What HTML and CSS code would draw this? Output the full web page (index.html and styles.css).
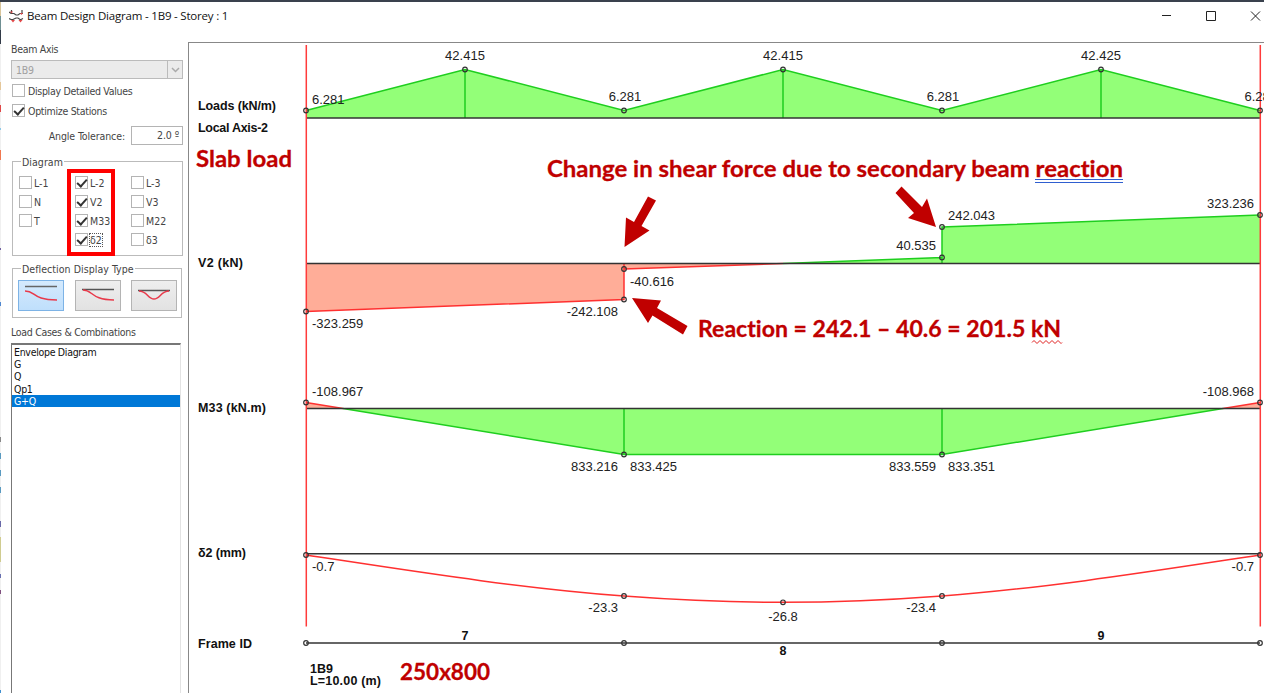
FILE: index.html
```html
<!DOCTYPE html>
<html lang="en">
<head>
  <meta charset="UTF-8">
  <title>Beam Design Diagram</title>
  <link rel="stylesheet" href="styles.css">
</head>
<body>

  <div class="desktop-edge"></div>

  <div class="window">
    <div class="titlebar">
      <svg class="app-icon" width="15" height="13" viewBox="0 0 15 13">
        <path d="M0 2l2 1.500h3L7 5h2l2-1.500h3M0 8.500l2 1h2l3-1.500h2l2 1.500h1l2-1M2.500 0v3M13 0v4" fill="none" stroke="#444" stroke-width="1.200"/>
        <path d="M1 1.500h3L2.500 3.500zM11 3h3l-1.500 2zM2 10h4l-2 2.500zM9.500 10h4l-2 2.500z" fill="#e04848"/>
      </svg>
      <span class="title">Beam Design Diagram - 1B9 - Storey : 1</span>
      <svg class="window-buttons" width="104" height="14" viewBox="0 0 104 14">
        <path d="M4 7.500h9M48.500 3.500h9v9h-9zM93 3.500l9 9M102 3.500l-9 9" fill="none" stroke="#222"/>
      </svg>
    </div>

    <div class="main">
      <div class="sidebar">
        <div class="label axis-label">Beam Axis</div>
        <div class="combo">
          <span>1B9</span>
          <div class="combo-arrow"><svg width="9" height="6" viewBox="0 0 9 6"><path d="M1 1l3.500 3.500L8 1" fill="none" stroke="#aaa" stroke-width="1.500"/></svg></div>
        </div>
        <div class="check detailed"><i class="box"></i><span>Display Detailed Values</span></div>
        <div class="check optimize"><i class="box on"></i><span>Optimize Stations</span></div>
        <div class="tolerance">
          <span>Angle Tolerance:</span>
          <div class="number">2.0 º</div>
        </div>

        <div class="group diagram">
          <span class="legend">Diagram</span>
          <div class="check-grid">
            <div class="check"><i class="box"></i><span>L-1</span></div>
            <div class="check"><i class="box on"></i><span>L-2</span></div>
            <div class="check"><i class="box"></i><span>L-3</span></div>
            <div class="check"><i class="box"></i><span>N</span></div>
            <div class="check"><i class="box on"></i><span>V2</span></div>
            <div class="check"><i class="box"></i><span>V3</span></div>
            <div class="check"><i class="box"></i><span>T</span></div>
            <div class="check"><i class="box on"></i><span>M33</span></div>
            <div class="check"><i class="box"></i><span>M22</span></div>
            <div></div>
            <div class="check"><i class="box on"></i><span class="focus">δ2</span></div>
            <div class="check"><i class="box"></i><span>δ3</span></div>
          </div>
          <div class="highlight"></div>
        </div>

        <div class="group deflection">
          <span class="legend">Deflection Display Type</span>
          <div class="types">
            <div class="type selected"><svg width="44" height="29" viewBox="0 0 44 29"><path d="M6 5.500h32" stroke="#666" stroke-width="1.500"/><path d="M6 10c11 0 7 9 32 9" fill="none" stroke="#e8394a" stroke-width="1.500"/></svg></div>
            <div class="type"><svg width="44" height="29" viewBox="0 0 44 29"><path d="M6 8.500h32" stroke="#555" stroke-width="1.500"/><path d="M7 9c10 0 8 10 31 10" fill="none" stroke="#e8394a" stroke-width="1.500"/></svg></div>
            <div class="type"><svg width="44" height="29" viewBox="0 0 44 29"><path d="M6 9.500h32" stroke="#555" stroke-width="1.500"/><path d="M7 10c8 0 9 8 15 8s7-8 15-8" fill="none" stroke="#e8394a" stroke-width="1.500"/></svg></div>
          </div>
        </div>

        <div class="label cases-label">Load Cases &amp; Combinations</div>
        <ul class="cases">
          <li>Envelope Diagram</li>
          <li>G</li>
          <li>Q</li>
          <li>Qp1</li>
          <li class="active">G+Q</li>
        </ul>
      </div>

      <div class="chart">
        <svg width="1075" height="650" viewBox="189 43 1075 650">
          <!-- row titles -->
          <g class="row-title">
            <text x="198" y="110" textLength="78">Loads (kN/m)</text>
            <text x="198" y="132" textLength="70">Local Axis-2</text>
            <text x="198" y="267" textLength="45">V2 (kN)</text>
            <text x="198" y="412" textLength="68">M33 (kN.m)</text>
            <text x="198" y="557" textLength="48">δ2 (mm)</text>
            <text x="198" y="648" textLength="54">Frame ID</text>
            <text x="310" y="673" textLength="23">1B9</text>
            <text x="310" y="685" textLength="71">L=10.00 (m)</text>
          </g>

          <!-- loads -->
          <path class="pos" d="M306 118V110.500L465 69.500L624 110.500L783 69.500L942 110.500L1101 69.500L1260 110.500V118z"/>
          <path class="pos-line" d="M306 110.500L465 69.500L624 110.500L783 69.500L942 110.500L1101 69.500L1260 110.500M465 69.500V118M783 69.500V118M1101 69.500V118"/>
          <path class="base" d="M306 118H1260"/>

          <!-- shear -->
          <path class="neg" d="M306 263.500V311.500L624 299.500V269L783 263.500z"/>
          <path class="neg-line" d="M306 311.500L624 299.500V263.500M624 269L783 263.500"/>
          <path class="pos" d="M783 263.500L942 257.500V227L1260 215V263.500z"/>
          <path class="pos-line" d="M783 263.500L942 257.500M942 263.500V227L1260 215"/>
          <path class="base" d="M306 263.500H1260"/>

          <!-- moment -->
          <path class="neg" d="M306 408.500V402.500L343 408.500zM1260 408.500V402.500L1223 408.500z"/>
          <path class="neg-line" d="M306 402.500L343 408.500M1260 402.500L1223 408.500"/>
          <path class="pos" d="M343 408.500L624 454.500H942L1223 408.500z"/>
          <path class="pos-line" d="M343 408.500L624 454.500H942L1223 408.500M624 408.500V454.500M942 408.500V454.500"/>
          <path class="base" d="M306 408.500H1260"/>

          <!-- deflection -->
          <path class="base" d="M306 553.800H1260"/>
          <path class="neg-line" d="M306 555C412 571 518 588 624 596C677 600 730 602.300 783 602.300C836 602.300 889 600 942 596C1048 588 1154 571 1260 555"/>

          <!-- frames -->
          <path class="base" d="M306 643H1260"/>

          <path class="support" d="M306.300 45V626.500M1260.300 45V626.500"/>

          <g class="node">
            <circle cx="306" cy="110.500" r="2.300"/><circle cx="465" cy="69.500" r="2.300"/><circle cx="624" cy="110.500" r="2.300"/><circle cx="783" cy="69.500" r="2.300"/>
            <circle cx="942" cy="110.500" r="2.300"/><circle cx="1101" cy="69.500" r="2.300"/><circle cx="1260" cy="110.500" r="2.300"/>
            <circle cx="306" cy="311.500" r="2.300"/><circle cx="624" cy="299.500" r="2.300"/><circle cx="624" cy="269" r="2.300"/>
            <circle cx="942" cy="257.500" r="2.300"/><circle cx="942" cy="227" r="2.300"/><circle cx="1260" cy="215" r="2.300"/>
            <circle cx="306" cy="402.500" r="2.300"/><circle cx="624" cy="454.500" r="2.300"/><circle cx="942" cy="454.500" r="2.300"/><circle cx="1260" cy="402.500" r="2.300"/>
            <circle cx="306" cy="555" r="2.300"/><circle cx="624" cy="596" r="2.300"/><circle cx="783" cy="602.300" r="2.300"/><circle cx="942" cy="596" r="2.300"/><circle cx="1260" cy="555" r="2.300"/>
            <circle cx="306" cy="643" r="2.300"/><circle cx="624" cy="643" r="2.300"/><circle cx="942" cy="643" r="2.300"/><circle cx="1260" cy="643" r="2.300"/>
          </g>

          <g class="value">
            <text x="312" y="104">6.281</text>
            <text x="465" y="60" class="mid">42.415</text>
            <text x="625" y="101" class="mid">6.281</text>
            <text x="783" y="60" class="mid">42.415</text>
            <text x="943" y="101" class="mid">6.281</text>
            <text x="1101" y="60" class="mid">42.425</text>
            <text x="1244.500" y="101">6.281</text>
            <text x="312" y="328">-323.259</text>
            <text x="618" y="316" class="end">-242.108</text>
            <text x="630" y="286">-40.616</text>
            <text x="936" y="250" class="end">40.535</text>
            <text x="948" y="220">242.043</text>
            <text x="1254" y="208" class="end">323.236</text>
            <text x="312" y="396">-108.967</text>
            <text x="1254" y="396" class="end">-108.968</text>
            <text x="618" y="471" class="end">833.216</text>
            <text x="630" y="471">833.425</text>
            <text x="936" y="471" class="end">833.559</text>
            <text x="948" y="471">833.351</text>
            <text x="312" y="571">-0.7</text>
            <text x="1254" y="571" class="end">-0.7</text>
            <text x="618" y="612" class="end">-23.3</text>
            <text x="783" y="621" class="mid">-26.8</text>
            <text x="936" y="612" class="end">-23.4</text>
          </g>
          <g class="row-title">
            <text x="465" y="640" class="mid">7</text>
            <text x="783" y="655" class="mid">8</text>
            <text x="1101" y="640" class="mid">9</text>
          </g>

          <!-- notes -->
          <g class="note">
            <text x="196" y="167" textLength="96" lengthAdjust="spacingAndGlyphs">Slab load</text>
            <text x="547" y="177" textLength="576" lengthAdjust="spacingAndGlyphs">Change in shear force due to secondary beam reaction</text>
            <text x="698" y="337" textLength="363" lengthAdjust="spacingAndGlyphs">Reaction = 242.1 – 40.6 = 201.5 kN</text>
            <text x="400" y="680" textLength="90" lengthAdjust="spacingAndGlyphs">250x800</text>
          </g>
          <g class="arrow">
            <path d="M648 196.500L656 200.500L641.500 226L649.500 230.500L624.500 247L626 217.500L634 222z"/>
            <path d="M901.500 186.500L922 207L927 198.500L936 227L908 218L914 213L895.500 193z"/>
            <path d="M632 298L661 300.500L657 308L687.500 326L683 334.500L652.500 315.500L648 323z"/>
          </g>
          <path class="grammar" d="M1035 179.500H1123M1035 182.500H1123"/>
          <path class="spelling" d="M1032 342.500l2-2 3 3 3-3 3 3 3-3 3 3 3-3 3 3 3-3 3 3 1-1"/>
        </svg>
      </div>
    </div>
  </div>

</body>
</html>
```

FILE: styles.css
```css
* {
  margin: 0;
  padding: 0;
  box-sizing: border-box;
}

body {
  display: flex;
  width: 1264px;
  height: 693px;
  overflow: hidden;
  background: #fff;
  border-top: 2px solid #3a414d;
  font-family: "DejaVu Sans Condensed", "DejaVu Sans", sans-serif;
  font-stretch: condensed;
  font-size: 10.5px;
  letter-spacing: -0.3px;
  color: #444;
}

.desktop-edge {
  width: 1px;
  flex-shrink: 0;
  background: linear-gradient(#d8c49a 0 14px, #6f8f92 14px 28px, #323a48 28px 42px, #f0f0f0 42px 80px, #e5c79a 80px 88px, #f0f0f0 88px 103px, #e04848 103px 110px, #f0f0f0 110px 126px, #8cc8e8 126px 128px, #f0f0f0 128px 148px, #f07850 148px 158px, #f0f0f0 158px 246px, #7060a0 246px 248px, #f0f0f0 248px 300px, #5088d0 300px 304px, #f0f0f0 304px 435px, #888 435px 440px, #f0f0f0 440px 451px, #5a9ac0 451px 457px, #f0f0f0 457px 468px, #5a9ac0 468px 474px, #f0f0f0 474px 485px, #5a9ac0 485px 491px, #f0f0f0 491px 519px, #6868a8 519px 525px, #f0f0f0 525px 535px, #d0cc90 535px 560px, #f0f0f0 560px 572px, #6870b0 572px 576px, #f0f0f0 576px 588px, #805080 588px 592px, #f0f0f0 592px 688px, #4090d0 688px);
}

.window {
  flex: 1;
  display: flex;
  flex-direction: column;
}

.titlebar {
  height: 40px;
  padding: 6px 2px 0 8px;
  display: flex;
  align-items: flex-start;
}

.app-icon {
  margin-top: 2px;
}

.title {
  margin-left: 3px;
  font-family: "Open Sans", "Noto Sans", sans-serif;
  font-stretch: normal;
  font-size: 11.5px;
  letter-spacing: -0.2px;
  line-height: 16px;
  color: #111;
}

.window-buttons {
  margin-left: auto;
}

.main {
  flex: 1;
  display: flex;
}

.sidebar {
  width: 187px;
  flex-shrink: 0;
  padding: 0 5px 0 10px;
  display: flex;
  flex-direction: column;
}

.label {
  height: 14px;
  line-height: 14px;
}

.combo {
  display: flex;
  justify-content: space-between;
  align-items: center;
  height: 19px;
  margin-top: 4px;
  padding-left: 4px;
  border: 1px solid #bbb;
  background: #ebebeb;
  color: #a0a0a0;
}

.combo-arrow {
  display: flex;
  align-items: center;
  justify-content: center;
  width: 15px;
  height: 17px;
  border-left: 1px solid #bbb;
}

.check {
  display: flex;
  align-items: center;
  gap: 3px;
  height: 13px;
  white-space: nowrap;
}

.detailed {
  margin: 5px 0 7px 0;
}

.detailed,
.optimize {
  margin-left: 1px;
}

.box {
  position: relative;
  width: 13px;
  height: 13px;
  flex-shrink: 0;
  border: 1px solid #b4b4b4;
  background: #fff;
}

.box.on::after {
  content: "";
  position: absolute;
  left: 3px;
  top: 0;
  width: 4px;
  height: 8px;
  border: solid #333;
  border-width: 0 2px 2px 0;
  transform: rotate(42deg);
}

.tolerance {
  display: flex;
  align-items: center;
  justify-content: flex-end;
  gap: 6px;
  height: 19px;
  margin-top: 9px;
  letter-spacing: -0.1px;
}

.number {
  width: 52px;
  height: 19px;
  line-height: 17px;
  padding-right: 3px;
  text-align: right;
  border: 1px solid #b4b4b4;
}

.group {
  position: relative;
  margin-left: 1px;
  border: 1px solid #bbb;
}

.legend {
  position: absolute;
  left: 8px;
  top: -7px;
  padding: 0 1px;
  line-height: 14px;
  letter-spacing: 0.05px;
  background: #fff;
  white-space: nowrap;
}

.diagram {
  height: 95px;
  margin-top: 16px;
  padding: 14px 0 0 6px;
}

.check-grid {
  display: grid;
  grid-template-columns: 56px 56px 50px;
  row-gap: 6px;
}

.check-grid .check {
  gap: 2px;
  letter-spacing: 0;
}

.focus {
  outline: 1px dotted #555;
}

/* red frame over the middle column */
.highlight {
  position: absolute;
  left: 54px;
  top: 7px;
  width: 48px;
  height: 87px;
  border: 4px solid #f00;
}

.deflection {
  height: 50px;
  margin-top: 12px;
  margin-right: 1px;
  padding: 11px 4px 0 5px;
}

.types {
  display: flex;
  justify-content: space-between;
}

.type {
  width: 46px;
  height: 31px;
  border: 1px solid #b4b4b4;
  background: linear-gradient(#eee, #e2e2e2);
}

.type.selected {
  border-color: #7db3e6;
  background: linear-gradient(#d5eafd, #bfdffc);
}

.cases-label {
  margin-top: 7px;
}

.cases {
  flex: 1;
  margin: 4px 2px 0 0;
  padding-top: 1px;
  list-style: none;
  border: solid #777;
  border-width: 2px 0 0 1px;
  border-right: 1px solid #e3e3e3;
  color: #111;
}

.cases li {
  height: 12.2px;
  line-height: 12.2px;
  padding-left: 2px;
}

.cases .active {
  background: #0078d7;
  color: #fff;
}

.chart {
  flex: 1;
  border-top: 1px solid #888;
  border-left: 1px solid #888;
  letter-spacing: 0;
}

.chart svg {
  display: block;
}

.pos {
  fill: #93ff78;
}

.neg {
  fill: #ffad98;
}

.pos-line {
  fill: none;
  stroke: #1fce1f;
  stroke-width: 1.5;
}

.neg-line {
  fill: none;
  stroke: #ff3030;
  stroke-width: 1.5;
}

.base {
  stroke: #333;
  stroke-width: 1.5;
}

.support {
  stroke: #ff3b3b;
  stroke-width: 1.5;
}

.node circle {
  fill: none;
  stroke: #333;
  stroke-width: 1.2;
}

.value {
  font-family: "Liberation Sans", Arial, sans-serif;
  font-stretch: normal;
  font-size: 13px;
  fill: #222;
}

.row-title {
  font-family: "Liberation Sans", Arial, sans-serif;
  font-stretch: normal;
  font-size: 12.5px;
  font-weight: bold;
  fill: #111;
}

.mid {
  text-anchor: middle;
}

.end {
  text-anchor: end;
}

.note {
  font-family: Lato, "Open Sans", sans-serif;
  font-stretch: normal;
  font-size: 23.5px;
  font-weight: bold;
  font-variant-ligatures: none;
  fill: #c00000;
  stroke: #c00000;
  stroke-width: 0.3;
}

.arrow {
  fill: #c00000;
}

.grammar {
  stroke: #2f5fd0;
  stroke-width: 1;
}

.spelling {
  fill: none;
  stroke: #e02020;
  stroke-width: 1;
}
```
